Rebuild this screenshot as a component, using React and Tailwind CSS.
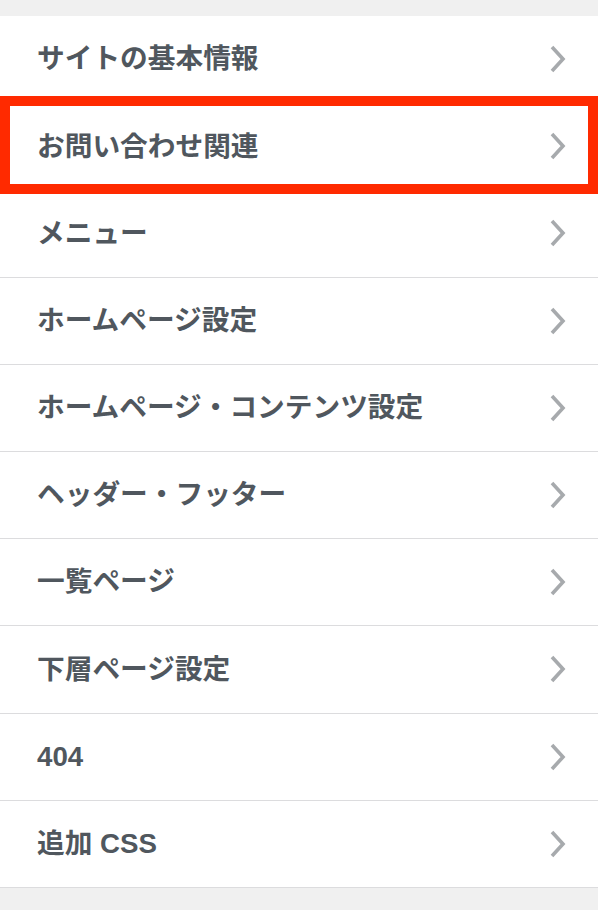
import React from 'react';

const sections = [
  'サイトの基本情報',
  'お問い合わせ関連',
  'メニュー',
  'ホームページ設定',
  'ホームページ・コンテンツ設定',
  'ヘッダー・フッター',
  '一覧ページ',
  '下層ページ設定',
  '404',
  '追加 CSS',
];

const Chevron = () => (
  <svg width="18" height="30" viewBox="0 0 18 30" fill="none">
    <path d="M3 3l11 12-11 12" stroke="#a7aaad" strokeWidth="3.6" />
  </svg>
);

export default function App() {
  return (
    <div
      className="relative w-[598px] h-[910px] bg-[#f0f0f0] pt-4 overflow-hidden"
      style={{ fontFamily: '"Liberation Sans", "Noto Sans CJK JP", sans-serif' }}
    >
      <ul className="bg-white">
        {sections.map((label) => (
          <li
            key={label}
            className="h-[87.2px] flex items-center justify-between pl-[37px] pr-[31px] border-b-[1.5px] border-[#dcdcde]"
          >
            <span className="text-[27.7px] font-bold text-[#50575e]">{label}</span>
            <Chevron />
          </li>
        ))}
      </ul>

      {/* highlight annotation */}
      <div className="absolute left-0 top-[96px] w-[598px] h-[98px] border-[10px] border-[#ff2a00] pointer-events-none" />
    </div>
  );
}
